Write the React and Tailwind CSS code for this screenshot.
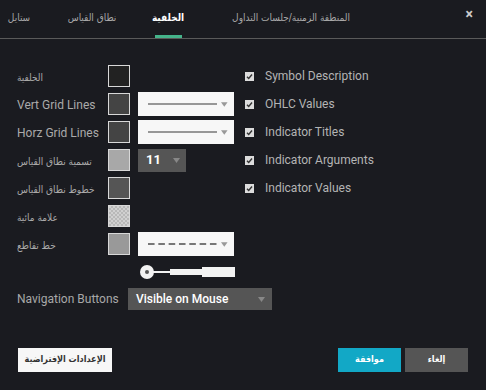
import React from 'react';

const ar = "font-['DejaVu_Sans_Condensed','DejaVu_Sans',sans-serif]";

const tabs = [
  { label: 'ستايل', cls: 'w-[38px]' },
  { label: 'نطاق القياس', cls: 'ml-[22px] w-[64px]' },
  { label: 'الخلفية', cls: 'ml-[21px] w-[46px]', active: true },
  { label: 'المنطقة الزمنية/جلسات التداول', cls: 'ml-[49px] w-[102px]' },
];

const Swatch = ({ color, checker }) => (
  <div
    className={`w-[22px] h-[22px] border border-[#d8d8d8] shrink-0 ${color}`}
    style={checker ? {
      backgroundColor: '#d0d0d0',
      backgroundImage: 'linear-gradient(45deg,#b8b8b8 25%,transparent 25%,transparent 75%,#b8b8b8 75%),linear-gradient(45deg,#b8b8b8 25%,transparent 25%,transparent 75%,#b8b8b8 75%)',
      backgroundSize: '4px 4px',
      backgroundPosition: '0 0,2px 2px',
    } : undefined}
  />
);

const Caret = ({ color = '#999' }) => (
  <svg width="7" height="5" viewBox="0 0 7 5"><path d="M0 0h7L3.5 5z" fill={color} /></svg>
);

const LineSelect = ({ dashed }) => (
  <div className="ml-[8px] w-[96px] h-[24px] bg-[#f7f7f7] flex items-center pl-[10px] pr-[6px] gap-[4px]">
    <svg width="74" height="4" viewBox="0 0 74 4">
      <line x1="0" y1="2" x2="74" y2="2" stroke="#777" strokeWidth={dashed ? 2 : 1.6} strokeDasharray={dashed ? '7 4' : undefined} />
    </svg>
    <Caret />
  </div>
);

const rows = [
  { label: 'الخلفية', color: 'bg-[#222222]' },
  { label: 'Vert Grid Lines', color: 'bg-[#444444]', extra: <LineSelect /> },
  { label: 'Horz Grid Lines', color: 'bg-[#444444]', extra: <LineSelect /> },
  {
    label: 'تسمية نطاق القياس', color: 'bg-[#a8a8a8]', extra: (
      <div className="ml-[8px] w-[48px] h-[23px] bg-[#555555] flex items-center justify-between pl-[8px] pr-[6px]">
        <span className="text-white text-[13px] font-bold">11</span>
        <Caret color="#888" />
      </div>
    ),
  },
  { label: 'خطوط نطاق القياس', color: 'bg-[#555555]' },
  { label: 'علامة مائية', checker: true },
  { label: 'خط تقاطع', color: 'bg-[#999999]', extra: <LineSelect dashed /> },
];

const checks = ['Symbol Description', 'OHLC Values', 'Indicator Titles', 'Indicator Arguments', 'Indicator Values'];

export default function App() {
  return (
    <div className="w-[486px] h-[390px] bg-[#1a1b20] flex flex-col text-[#aaaaaa]" style={{ fontFamily: 'Roboto, "DejaVu Sans", sans-serif' }}>
      <div className="h-[39px] border-b border-[#5a5a5a] flex items-stretch shrink-0">
        {tabs.map((t) => (
          <div key={t.label} className={`${t.cls} flex flex-col items-center`}>
            <div className={`flex-1 flex items-center text-[10px] whitespace-nowrap ${ar} ${t.active ? 'text-white font-bold' : 'text-[#a8a8a8]'}`} dir="rtl">
              {t.label}
            </div>
            <div className={`w-[27px] h-[3px] ${t.active ? 'bg-[#45b48b]' : ''}`} />
          </div>
        ))}
        <div className="ml-auto mr-[13px] flex items-center pb-[10px] text-[#cccccc] text-[14px] font-bold">×</div>
      </div>

      <div className="flex pt-[25px] pl-[17px]">
        <div className="w-[228px] flex flex-col gap-[4px]">
          {rows.map((r) => (
            <div key={r.label} className="h-[24px] flex items-center">
              <div className="w-[91px] whitespace-nowrap">
                {/[a-z]/i.test(r.label)
                  ? <span className="text-[12px]">{r.label}</span>
                  : <span dir="rtl" className={`text-[10px] ${ar}`}>{r.label}</span>}
              </div>
              <Swatch color={r.color} checker={r.checker} />
              {r.extra}
            </div>
          ))}
          <div className="h-[24px] flex items-center pl-[122px]">
            <svg width="96" height="16" viewBox="0 0 96 16">
              <line x1="12" y1="8" x2="32" y2="8" stroke="#f2f2f2" strokeWidth="2" />
              <rect x="31" y="5" width="33" height="6" fill="#f2f2f2" />
              <rect x="63" y="3" width="33" height="10" fill="#f2f2f2" />
              <circle cx="8" cy="8" r="7" fill="#f2f2f2" />
              <circle cx="8" cy="8" r="2" fill="#555" />
            </svg>
          </div>
        </div>
        <div className="flex flex-col gap-[4px]">
          {checks.map((c) => (
            <div key={c} className="h-[24px] flex items-center">
              <div className="w-[9px] h-[9px] bg-[#dcdcdc] flex items-center justify-center">
                <svg width="7" height="7" viewBox="0 0 7 7"><path d="M1 3.8l1.7 1.7L6 1.5" fill="none" stroke="#333" strokeWidth="1.4" /></svg>
              </div>
              <span className="ml-[11px] text-[12px] text-[#b4b4b4]">{c}</span>
            </div>
          ))}
        </div>
      </div>

      <div className="flex items-center pl-[17px] mt-[3px] h-[24px]">
        <span className="w-[111px] text-[12px] text-[#a8a8a8]">Navigation Buttons</span>
        <div className="w-[144px] h-[22px] bg-[#555555] flex items-center justify-between pl-[8px] pr-[7px]">
          <span className="text-white text-[12px] font-medium">Visible on Mouse</span>
          <Caret color="#888" />
        </div>
      </div>

      <div className={`flex items-center mt-auto mb-[18px] px-[18px] h-[24px] text-[9px] whitespace-nowrap ${ar}`} dir="ltr">
        <button className="w-[94px] h-[24px] bg-[#f7f7f7] text-[#333] font-bold" dir="rtl">الإعدادات الإفتراضية</button>
        <button className="ml-auto w-[63px] h-[24px] bg-[#12a8c6] text-white font-bold" dir="rtl">موافقة</button>
        <button className="ml-[4px] w-[63px] h-[24px] bg-[#555555] text-white font-bold" dir="rtl">إلغاء</button>
      </div>
    </div>
  );
}
